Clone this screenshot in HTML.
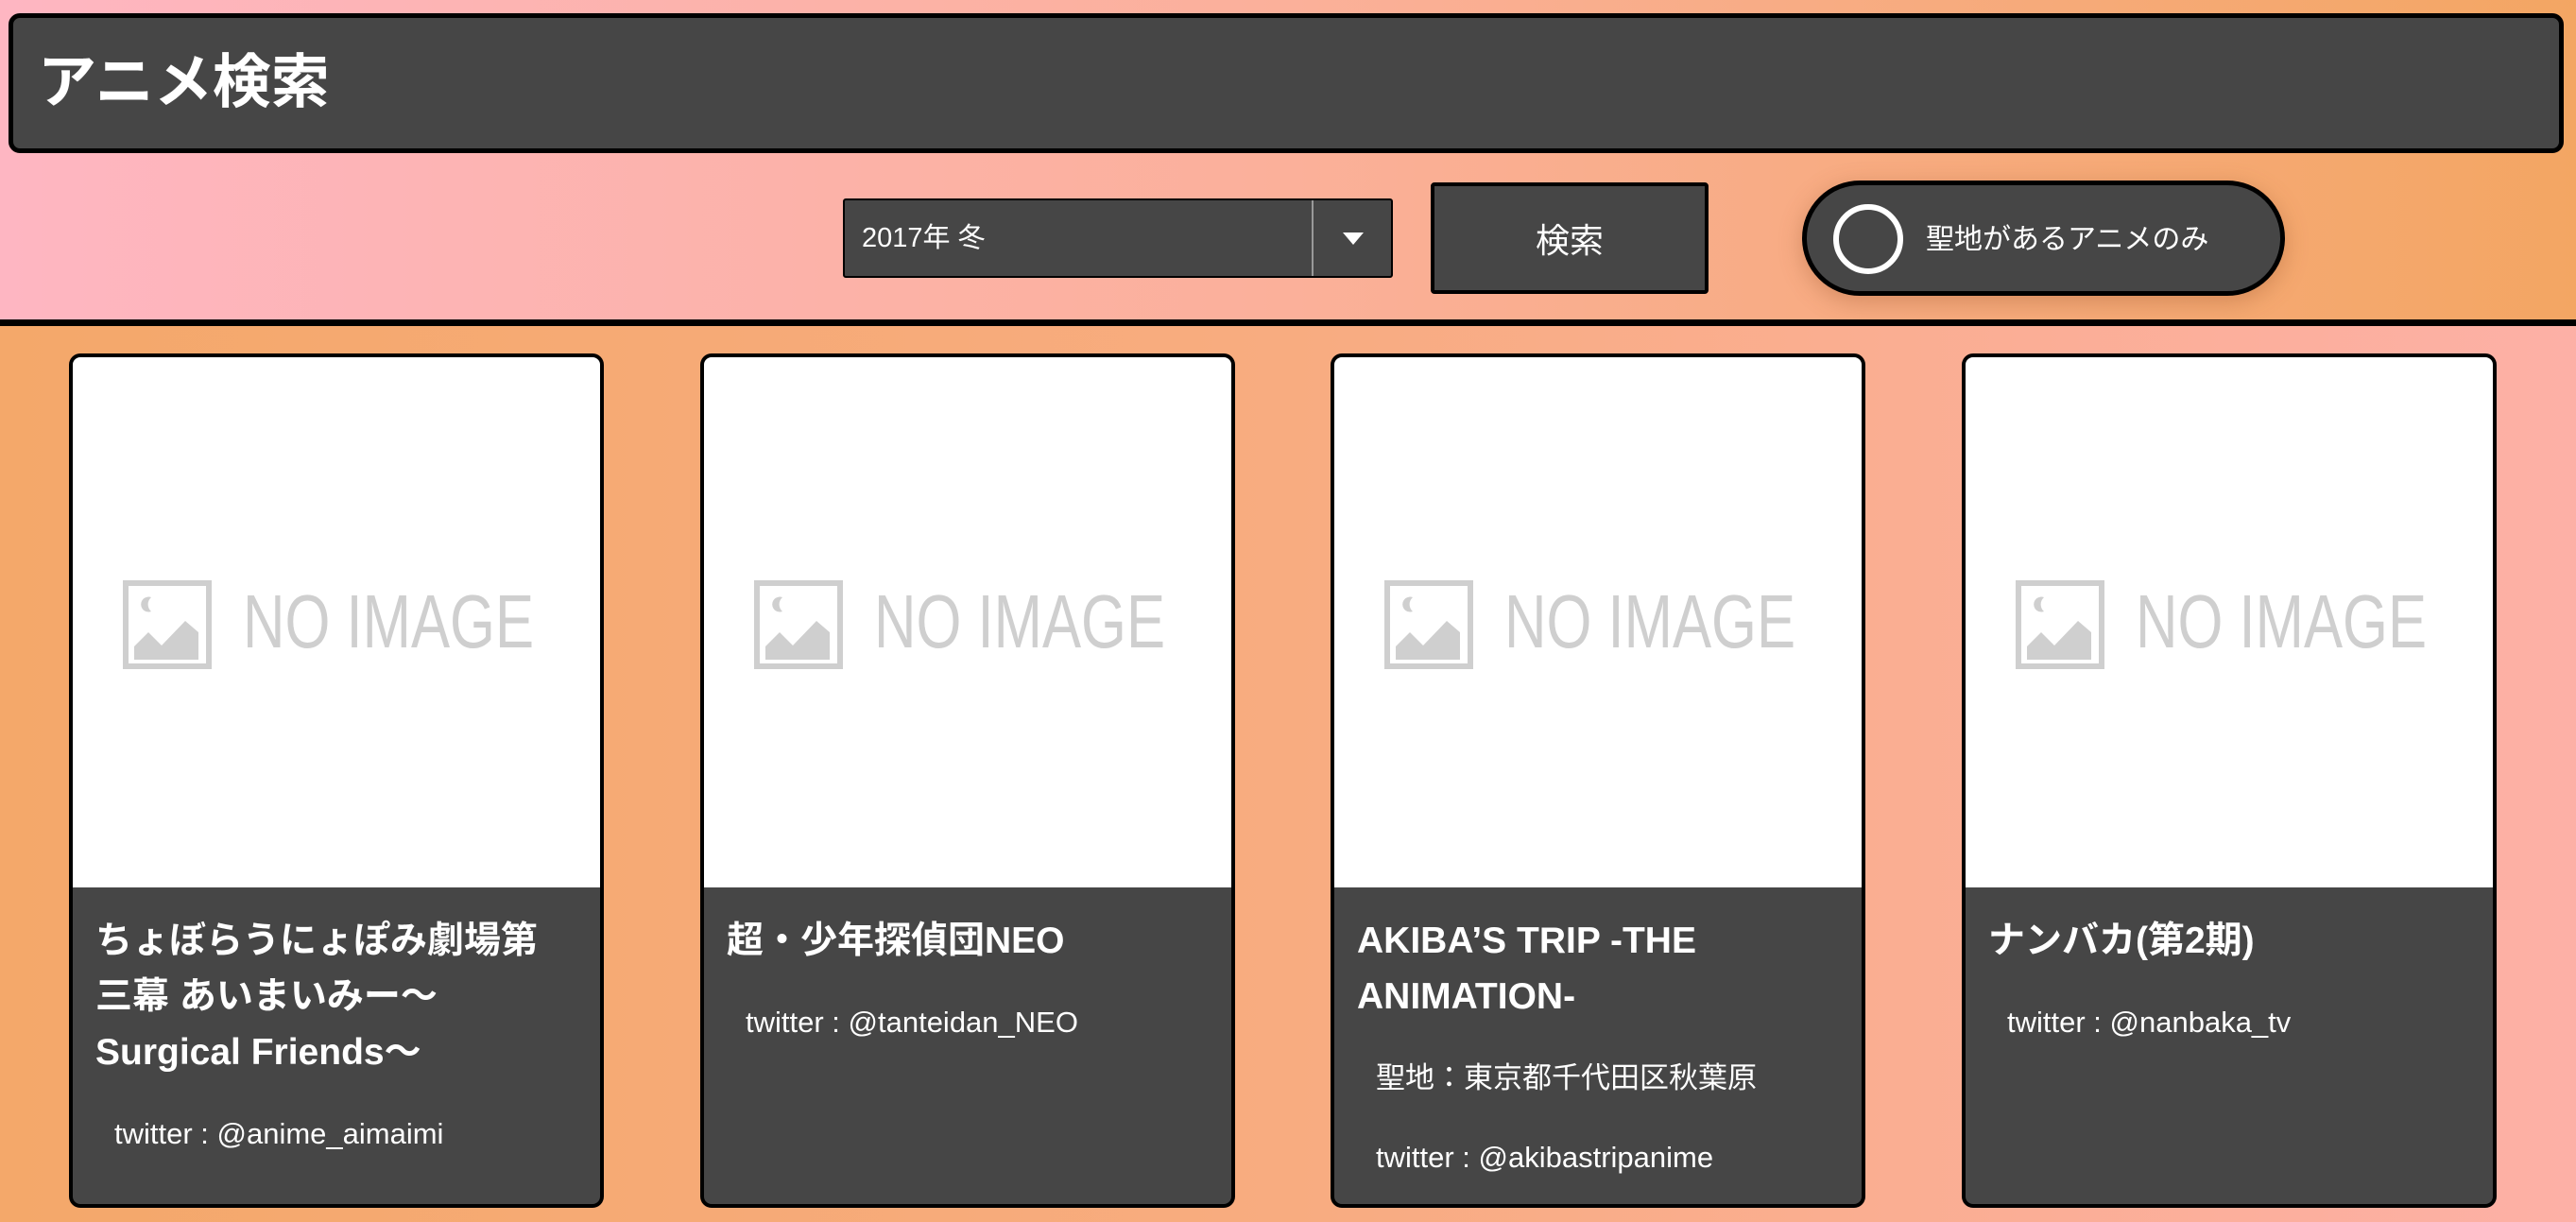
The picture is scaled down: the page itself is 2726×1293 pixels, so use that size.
<!DOCTYPE html>
<html><head><meta charset="utf-8"><style>
*{margin:0;padding:0;box-sizing:border-box}
body{width:2726px;height:1293px;overflow:hidden;position:relative;font-family:"Liberation Sans","Noto Sans CJK JP",sans-serif;background:linear-gradient(90deg,#f4a86a 0%,#f8ac80 50%,#fdb0a6 100%)}
.top{position:absolute;left:0;top:0;width:2726px;height:345px;background:linear-gradient(90deg,#feb6c2 0%,#fbb09a 50%,#f3a663 100%);border-bottom:7px solid #000}
.hdr{position:absolute;left:9px;top:14px;width:2704px;height:148px;background:#464646;border:5px solid #000;border-radius:12px}
.hdr h1{position:absolute;left:26px;top:36px;font-size:62px;line-height:66px;color:#fff;font-weight:bold}
.sel{position:absolute;left:892px;top:210px;width:582px;height:84px;background:#464646;border:2px solid #000;border-radius:3px;color:#fff;font-size:29px;line-height:80px;padding-left:18px}
.sel .div{position:absolute;left:494px;top:0;width:2px;height:80px;background:#999}
.sel .arr{position:absolute;left:527px;top:34px;width:0;height:0;border-left:11px solid transparent;border-right:11px solid transparent;border-top:13px solid #fff}
.btn{position:absolute;left:1514px;top:193px;width:294px;height:118px;background:#464646;border:4px solid #000;border-radius:4px;color:#fff;font-size:36px;line-height:116px;text-align:center}
.tog{position:absolute;left:1907px;top:191px;width:511px;height:122px;background:#464646;border:5px solid #000;border-radius:61px;box-shadow:0 6px 24px rgba(150,80,40,.35);color:#fff;font-size:30px;line-height:116px;padding-left:126px}
.tog .c{position:absolute;left:28px;top:20px;width:74px;height:74px;border:6px solid #fff;border-radius:50%}
.card{position:absolute;top:374px;width:566px;height:904px;background:#464646;border:4px solid #000;border-radius:12px;overflow:hidden;color:#fff}
.img{position:absolute;left:0;top:0;width:100%;height:561px;background:#fff}
.ic{position:absolute;left:53px;top:236px}
.ni{position:absolute;left:180px;top:240px;font-size:80px;line-height:80px;color:#cfcfcf;transform:scaleX(.77);transform-origin:0 0;white-space:nowrap}
.t{position:absolute;left:24px;top:588px;width:530px;font-size:39px;line-height:59px;font-weight:bold}
.tw{font-size:31px;line-height:50px;padding-left:20px;font-weight:normal}
</style></head><body>
<div class="top">
<div class="hdr"><h1>アニメ検索</h1></div>
<div class="sel">2017年 冬<div class="div"></div><div class="arr"></div></div>
<div class="btn">検索</div>
<div class="tog"><div class="c"></div>聖地があるアニメのみ</div>
</div>

<div class="card" style="left:73px">
<div class="img"><svg class="ic" width="94" height="94" viewBox="0 0 94 94"><rect x="3" y="3" width="88" height="88" fill="none" stroke="#cfcfcf" stroke-width="6"/><path d="M12 84V70L27 55L41 69L66 43L80 55V84Z" fill="#cfcfcf"/><path d="M30 18a8 8 0 1 0 0 15a10 10 0 0 1 0-15z" fill="#cfcfcf"/></svg><div class="ni">NO IMAGE</div></div>
<div class="t">ちょぼらうにょぽみ劇場第<br>三幕 あいまいみー〜<br>Surgical Friends〜<div class="tw" style="margin-top:32px">twitter : @anime_aimaimi</div></div>
</div>
<div class="card" style="left:741px">
<div class="img"><svg class="ic" width="94" height="94" viewBox="0 0 94 94"><rect x="3" y="3" width="88" height="88" fill="none" stroke="#cfcfcf" stroke-width="6"/><path d="M12 84V70L27 55L41 69L66 43L80 55V84Z" fill="#cfcfcf"/><path d="M30 18a8 8 0 1 0 0 15a10 10 0 0 1 0-15z" fill="#cfcfcf"/></svg><div class="ni">NO IMAGE</div></div>
<div class="t">超・少年探偵団NEO<div class="tw" style="margin-top:32px">twitter : @tanteidan_NEO</div></div>
</div>
<div class="card" style="left:1408px">
<div class="img"><svg class="ic" width="94" height="94" viewBox="0 0 94 94"><rect x="3" y="3" width="88" height="88" fill="none" stroke="#cfcfcf" stroke-width="6"/><path d="M12 84V70L27 55L41 69L66 43L80 55V84Z" fill="#cfcfcf"/><path d="M30 18a8 8 0 1 0 0 15a10 10 0 0 1 0-15z" fill="#cfcfcf"/></svg><div class="ni">NO IMAGE</div></div>
<div class="t">AKIBA’S TRIP -THE<br>ANIMATION-<div class="tw" style="margin-top:32px">聖地：東京都千代田区秋葉原</div><div class="tw" style="margin-top:34px">twitter : @akibastripanime</div></div>
</div>
<div class="card" style="left:2076px">
<div class="img"><svg class="ic" width="94" height="94" viewBox="0 0 94 94"><rect x="3" y="3" width="88" height="88" fill="none" stroke="#cfcfcf" stroke-width="6"/><path d="M12 84V70L27 55L41 69L66 43L80 55V84Z" fill="#cfcfcf"/><path d="M30 18a8 8 0 1 0 0 15a10 10 0 0 1 0-15z" fill="#cfcfcf"/></svg><div class="ni">NO IMAGE</div></div>
<div class="t">ナンバカ(第2期)<div class="tw" style="margin-top:32px">twitter : @nanbaka_tv</div></div>
</div>
</body></html>
